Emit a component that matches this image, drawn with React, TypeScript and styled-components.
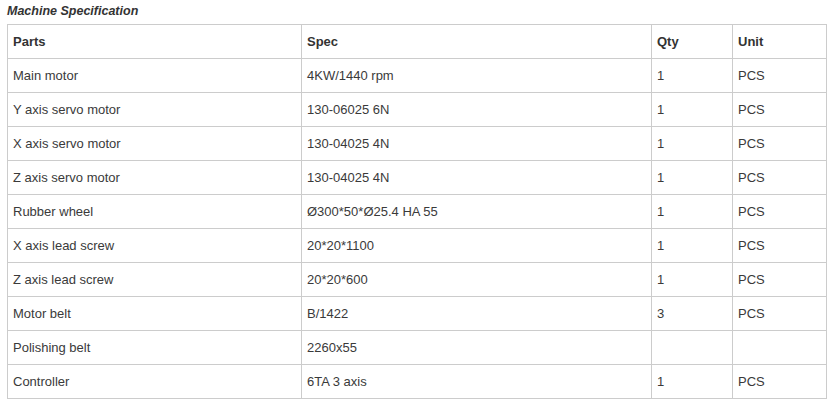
import styled, { createGlobalStyle } from 'styled-components';

const GlobalStyle = createGlobalStyle`
  body {
    margin: 0;
    background: #ffffff;
    font-family: "Liberation Sans", Arial, sans-serif;
    color: #333333;
  }
`;

const Page = styled.div`
  padding: 2px 7px 0 7px;
  width: 819px;
`;

const Title = styled.div`
  font-size: 12.5px;
  font-weight: bold;
  font-style: italic;
  line-height: 18px;
  height: 22px;
  color: #333333;
`;

const StyledTable = styled.table`
  border-collapse: collapse;
  table-layout: fixed;
  width: 819px;
`;

const HeaderCell = styled.th<{ $width: number }>`
  box-sizing: border-box;
  width: ${(p) => p.$width}px;
  border: 1px solid #cccccc;
  text-align: left;
  padding: 0 5px;
  height: 34px;
  font-size: 13px;
  font-weight: bold;
  color: #333333;
`;

const DataCell = styled.td`
  box-sizing: border-box;
  border: 1px solid #cccccc;
  text-align: left;
  padding: 0 5px;
  height: 34px;
  font-size: 13px;
  color: #3a3a3a;
`;

const columns = [
  { label: 'Parts', width: 294 },
  { label: 'Spec', width: 350 },
  { label: 'Qty', width: 81 },
  { label: 'Unit', width: 94 },
];

const rows: string[][] = [
  ['Main motor', '4KW/1440 rpm', '1', 'PCS'],
  ['Y axis servo motor', '130-06025 6N', '1', 'PCS'],
  ['X axis servo motor', '130-04025 4N', '1', 'PCS'],
  ['Z axis servo motor', '130-04025 4N', '1', 'PCS'],
  ['Rubber wheel', 'Ø300*50*Ø25.4 HA 55', '1', 'PCS'],
  ['X axis lead screw', '20*20*1100', '1', 'PCS'],
  ['Z axis lead screw', '20*20*600', '1', 'PCS'],
  ['Motor belt', 'B/1422', '3', 'PCS'],
  ['Polishing belt', '2260x55', '', ''],
  ['Controller', '6TA 3 axis', '1', 'PCS'],
];

const App = () => {
  return (
    <>
      <GlobalStyle />
      <Page>
        <Title>Machine Specification</Title>
        <StyledTable>
          <thead>
            <tr>
              {columns.map((col) => (
                <HeaderCell key={col.label} $width={col.width}>
                  {col.label}
                </HeaderCell>
              ))}
            </tr>
          </thead>
          <tbody>
            {rows.map((row, i) => (
              <tr key={`${row[0]}-${i}`}>
                {row.map((cell, j) => (
                  <DataCell key={j}>{cell}</DataCell>
                ))}
              </tr>
            ))}
          </tbody>
        </StyledTable>
      </Page>
    </>
  );
};

export default App;
